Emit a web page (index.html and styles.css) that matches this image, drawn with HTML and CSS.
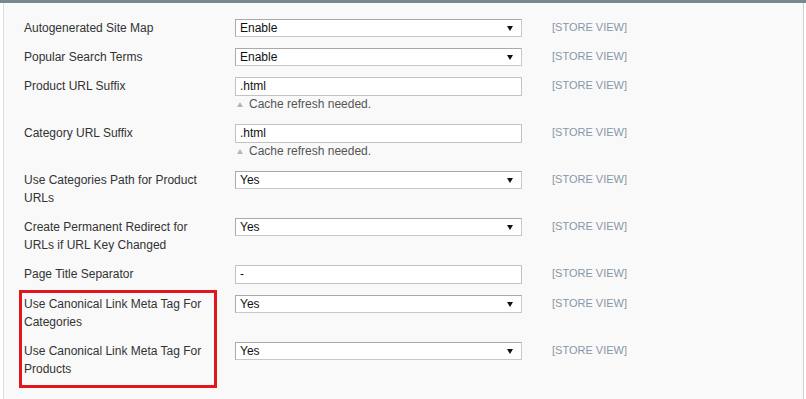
FILE: index.html
```html
<!DOCTYPE html>
<html lang="en">
<head>
    <meta charset="UTF-8">
    <meta name="viewport" content="width=device-width, initial-scale=1.0">
    <title>Search Engine Optimization</title>
    <link rel="stylesheet" href="styles.css">
</head>
<body>
    <div class="topbar"></div>

    <!-- SEO config fields -->
    <div class="panel">
        <div class="row">
            <div class="label">Autogenerated Site Map</div>
            <div class="value"><div class="select">Enable</div></div>
            <div class="scope">[STORE VIEW]</div>
        </div>
        <div class="row">
            <div class="label">Popular Search Terms</div>
            <div class="value"><div class="select">Enable</div></div>
            <div class="scope">[STORE VIEW]</div>
        </div>
        <div class="row">
            <div class="label">Product URL Suffix</div>
            <div class="value">
                <div class="input">.html</div>
                <p class="note">Cache refresh needed.</p>
            </div>
            <div class="scope">[STORE VIEW]</div>
        </div>
        <div class="row">
            <div class="label">Category URL Suffix</div>
            <div class="value">
                <div class="input">.html</div>
                <p class="note">Cache refresh needed.</p>
            </div>
            <div class="scope">[STORE VIEW]</div>
        </div>
        <div class="row">
            <div class="label">Use Categories Path for Product URLs</div>
            <div class="value"><div class="select">Yes</div></div>
            <div class="scope">[STORE VIEW]</div>
        </div>
        <div class="row">
            <div class="label">Create Permanent Redirect for URLs if URL Key Changed</div>
            <div class="value"><div class="select">Yes</div></div>
            <div class="scope">[STORE VIEW]</div>
        </div>
        <div class="row">
            <div class="label">Page Title Separator</div>
            <div class="value"><div class="input">-</div></div>
            <div class="scope">[STORE VIEW]</div>
        </div>
        <div class="row">
            <div class="label">Use Canonical Link Meta Tag For Categories</div>
            <div class="value"><div class="select">Yes</div></div>
            <div class="scope">[STORE VIEW]</div>
        </div>
        <div class="row">
            <div class="label">Use Canonical Link Meta Tag For Products</div>
            <div class="value"><div class="select">Yes</div></div>
            <div class="scope">[STORE VIEW]</div>
        </div>

        <!-- highlight around the canonical tag labels -->
        <div class="highlight"></div>
    </div>

    <div class="bottom-line"></div>
</body>
</html>
```

FILE: styles.css
```css
body {
    margin: 0;
    background: #fff;
    font-family: "Liberation Sans", Arial, sans-serif;
    font-size: 12px;
    color: #333;
}
.topbar {
    height: 3px;
    background: #76898f;
}
.panel {
    position: relative;
    margin: 0 2px 0 3px;
    padding: 16px 0 14px 20px;
    background: #f9f9f9;
    border-left: 1px solid #dedede;
    border-right: 1px solid #cfcfcf;
}
.row {
    display: flex;
    align-items: flex-start;
    margin-bottom: 11px;
}
.row:last-of-type {
    margin-bottom: 0;
}
.label {
    width: 190px;
    padding-right: 21px;
    line-height: 18px;
}
.value {
    width: 287px;
}
.select,
.input {
    box-sizing: border-box;
    background: #fff;
    color: #111;
    padding-left: 4px;
}
.select {
    position: relative;
    height: 18px;
    line-height: 16px;
    border: 1px solid #aaa;
    border-right-color: #c8c8c8;
    border-bottom-color: #c8c8c8;
}
.select::after {
    content: "";
    position: absolute;
    right: 8px;
    top: 6px;
    border-left: 3px solid transparent;
    border-right: 3px solid transparent;
    border-top: 5px solid #111;
}
.input {
    height: 19px;
    line-height: 17px;
    border: 1px solid #c2c2c2;
}
.note {
    margin: 0;
    padding-left: 2px;
    line-height: 17px;
    color: #555;
}
.note::before {
    content: "";
    display: inline-block;
    margin-right: 6px;
    vertical-align: 1px;
    border-left: 3px solid transparent;
    border-right: 3px solid transparent;
    border-bottom: 5px solid #b5b5b5;
}
.scope {
    margin-left: 30px;
    font-size: 11px;
    line-height: 16px;
    color: #8797a7;
}
.highlight {
    position: absolute;
    left: 15px;
    top: 287px;
    width: 192px;
    height: 92px;
    border: 3px solid #e3161f;
}
.bottom-line {
    margin-top: 4px;
    height: 3px;
    background: #e4e4e4;
}
```
